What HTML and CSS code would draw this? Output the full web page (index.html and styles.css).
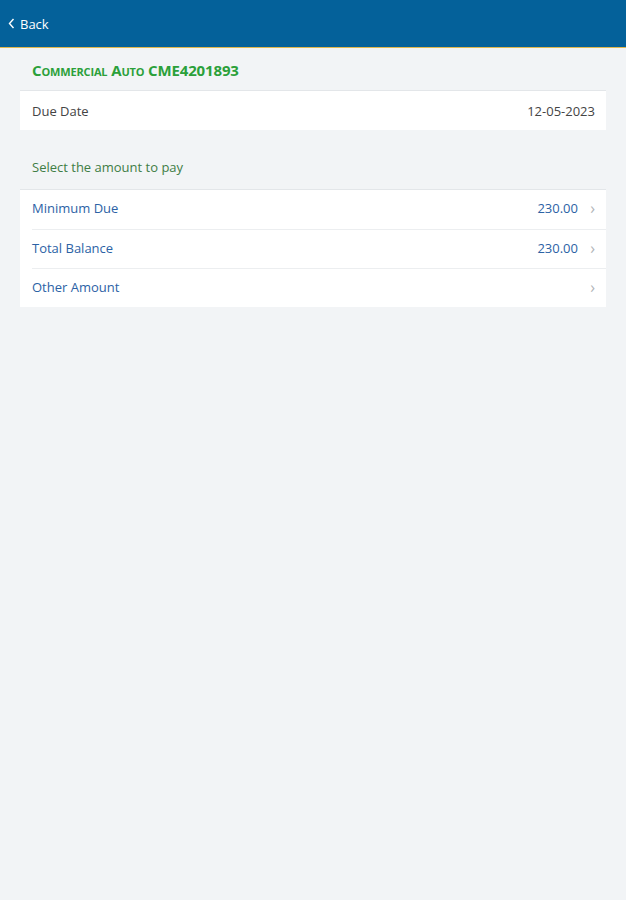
FILE: index.html
```html
<!DOCTYPE html>
<html lang="en">
<head>
<meta charset="UTF-8">
<meta name="viewport" content="width=device-width, initial-scale=1.0">
<title>Make a Payment</title>
<link rel="stylesheet" href="styles.css">
</head>
<body>
<header class="topbar">
    <a class="back" href="#">
        <svg class="back-icon" width="7" height="11" viewBox="0 0 7 11"><path d="M5.5 1 L1.5 5.5 L5.5 10" fill="none" stroke="#fff" stroke-width="1.4"/></svg>
        Back
    </a>
</header>

<div class="page">
    <h1 class="policy">Commercial Auto CME4201893</h1>

    <div class="card">
        <div class="row">
            <span class="label">Due Date</span>
            <span class="value">12-05-2023</span>
        </div>
    </div>

    <p class="section-label">Select the amount to pay</p>

    <div class="card">
        <a class="row link" href="#">
            <span class="label">Minimum Due</span>
            <span class="amount">230.00</span>
            <span class="chevron">&rsaquo;</span>
        </a>
        <a class="row link" href="#">
            <span class="label">Total Balance</span>
            <span class="amount">230.00</span>
            <span class="chevron">&rsaquo;</span>
        </a>
        <a class="row link" href="#">
            <span class="label">Other Amount</span>
            <span class="amount"></span>
            <span class="chevron">&rsaquo;</span>
        </a>
    </div>
</div>
</body>
</html>
```

FILE: styles.css
```css
body {
    margin: 0;
    font-family: "Open Sans", "Liberation Sans", Arial, sans-serif;
    background-color: #f2f4f6;
    color: #444;
}

a {
    text-decoration: none;
}

.topbar {
    height: 47px;
    background-color: #04619a;
    border-bottom: 1px solid #e0b84e;
    display: flex;
    align-items: center;
    padding-left: 8px;
}

.back {
    display: flex;
    align-items: center;
    gap: 5px;
    color: #fff;
    font-size: 13px;
}

.page {
    padding: 0 20px;
}

.policy {
    margin: 0;
    padding: 12px 12px 10px;
    font-size: 15px;
    line-height: 20px;
    font-weight: 700;
    font-variant: small-caps;
    letter-spacing: -0.15px;
    color: #2ba03a;
}

.card {
    background-color: #fff;
    border-top: 1px solid #e3e6e9;
}

.row {
    display: flex;
    align-items: center;
    box-sizing: border-box;
    height: 39px;
    margin-left: 12px;
    padding-right: 11px;
    font-size: 13px;
}

.row + .row {
    border-top: 1px solid #eceef0;
}

.label {
    flex: 1;
}

.value {
    color: #444;
}

.link {
    padding-bottom: 3px;
    color: #2c62a5;
}

.amount {
    color: #2c62a5;
}

.chevron {
    width: 9px;
    margin-left: 8px;
    color: #b0b4b8;
    font-size: 16px;
    text-align: right;
}

.section-label {
    margin: 0;
    padding: 28px 12px 13px;
    font-size: 13px;
    line-height: 18px;
    color: #3f7d45;
}
```
